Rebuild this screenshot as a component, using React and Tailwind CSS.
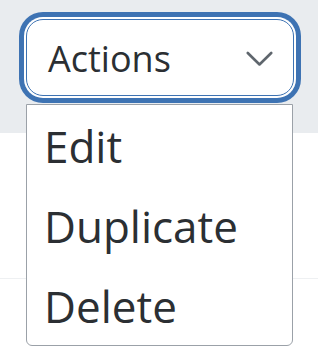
import React from 'react';

const items = ['Edit', 'Duplicate', 'Delete'];

const Chevron = () => (
  <svg width="27" height="16" viewBox="0 0 27 16" fill="none">
    <polyline points="1.8,2 13.5,13.5 25.2,2" stroke="#5f666d" strokeWidth="2.6" strokeLinecap="round" strokeLinejoin="round" />
  </svg>
);

export default function App() {
  return (
    <div className="relative w-[318px] h-[362px] bg-white overflow-hidden font-['Open_Sans',sans-serif] text-[#2b2f33]">
      {/* Toolbar */}
      <div className="h-[133px] bg-[#e9ecef] pt-[19px] pl-[26px]">
        <div className="relative w-[268px] z-10">
          <button className="w-full h-[77px] flex items-center justify-between pl-[21px] pr-[20px] pt-[3px] bg-white border border-[#3e73b3] rounded-[17px] ring-[5px] ring-[#3e73b3] ring-offset-2 ring-offset-white">
            <span className="text-[36px] leading-none">Actions</span>
            <Chevron />
          </button>

          {/* Dropdown menu */}
          <div className="absolute left-0 top-[85px] w-[267px] bg-white border-[1.5px] border-[#9ba1a8] rounded-b-[6px]">
            {items.map((item) => (
              <div key={item} className="h-[80px] flex items-center pl-[17px] pt-[3px] text-[44px] leading-[77px]">
                {item}
              </div>
            ))}
          </div>
        </div>
      </div>

      {/* Content */}
      <div className="h-[146px] border-b border-[#eef0f2]" />
    </div>
  );
}
